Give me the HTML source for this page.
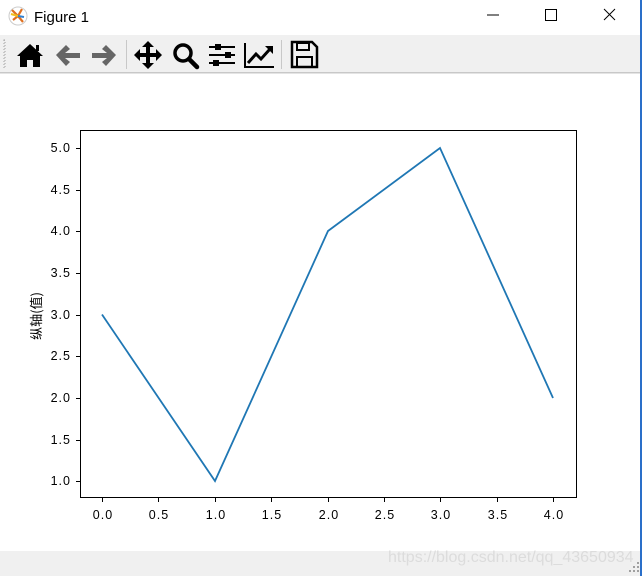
<!DOCTYPE html>
<html><head><meta charset="utf-8"><style>
html,body{margin:0;padding:0;width:642px;height:576px;overflow:hidden;background:#fff;font-family:"Liberation Sans","Noto Sans CJK SC",sans-serif}
</style></head><body>
<svg width="642" height="576" viewBox="0 0 642 576" xmlns="http://www.w3.org/2000/svg" style="position:absolute;left:0;top:0">
<rect x="0" y="0" width="642" height="576" fill="#fff"/>
<rect x="640" y="0" width="2" height="576" fill="#2a6fc9"/>
<circle cx="18" cy="16" r="9" fill="#fff" stroke="#ccc"/>
<path d="M12 10 L18 16 M18 16 L13 20 M18 16 L22 9 M18 16 L23 22" stroke="#e07020" stroke-width="2.2"/>
<path d="M18 16 L11 14" stroke="#f0c020" stroke-width="2.2"/>
<path d="M18 16 L24 17" stroke="#3080d0" stroke-width="2"/>
<text x="34" y="22" font-size="15" fill="#000">Figure 1</text>
<line x1="487" y1="15" x2="499" y2="15" stroke="#000" stroke-width="1"/>
<rect x="545.5" y="9.5" width="11" height="11" fill="none" stroke="#000"/>
<path d="M604 9 L615 20 M615 9 L604 20" stroke="#000" stroke-width="1"/>
<rect x="0" y="35" width="640" height="37" fill="#f0f0f0"/>
<rect x="0" y="72" width="640" height="1.5" fill="#c8c8c8"/>
<rect x="4" y="40" width="1" height="28" fill="none" stroke="#a0a0a0" stroke-dasharray="1 2"/>
<rect x="126" y="40" width="1" height="29" fill="#c8c8c8"/>
<rect x="281" y="40" width="1" height="29" fill="#c8c8c8"/>
<path d="M17 56 L30 44 L43 56 L40 56 L40 67 L33 67 L33 60 L27 60 L27 67 L20 67 L20 56 Z" fill="#000"/>
<rect x="36" y="45" width="3" height="6" fill="#000"/>
<path d="M56 55 L66 45 L70 49 L65 53 L80 53 L80 58 L65 58 L70 62 L66 66 Z" fill="#666"/>
<path d="M116 55 L106 45 L102 49 L107 53 L92 53 L92 58 L107 58 L102 62 L106 66 Z" fill="#666"/>
<path d="M148 41 L154 47 L150 47 L150 53 L156 53 L156 49 L162 55 L156 61 L156 57 L150 57 L150 63 L154 63 L148 69 L142 63 L146 63 L146 57 L140 57 L140 61 L134 55 L140 49 L140 53 L146 53 L146 47 L142 47 Z" fill="#000"/>
<circle cx="183" cy="53" r="8" fill="none" stroke="#000" stroke-width="3.5"/>
<path d="M189 59 L197 67" stroke="#000" stroke-width="4.5" stroke-linecap="round"/>
<g stroke="#000" stroke-width="2"><line x1="209" y1="47" x2="235" y2="47"/><line x1="209" y1="55" x2="235" y2="55"/><line x1="209" y1="63" x2="235" y2="63"/></g>
<rect x="215" y="44" width="6" height="6" fill="#000"/><rect x="225" y="52" width="6" height="6" fill="#000"/><rect x="213" y="60" width="6" height="6" fill="#000"/>
<path d="M245 43 L245 67 L274 67" fill="none" stroke="#000" stroke-width="2"/>
<path d="M248 63 L256 54 L261 59 L270 49" fill="none" stroke="#000" stroke-width="3"/>
<path d="M265 46 L273 46 L273 54 Z" fill="#000"/>
<path d="M292 42 L312 42 L317 47 L317 67 L292 67 Z" fill="none" stroke="#000" stroke-width="2.5"/>
<rect x="297" y="43" width="12" height="7" fill="none" stroke="#000" stroke-width="2"/>
<rect x="297" y="57" width="15" height="10" fill="none" stroke="#000" stroke-width="2"/>
<rect x="80.5" y="130.5" width="496" height="367" fill="none" stroke="#000" stroke-width="1"/>
<g stroke="#000" stroke-width="1">
<line x1="76" y1="148.5" x2="80" y2="148.5"/><line x1="76" y1="190.5" x2="80" y2="190.5"/><line x1="76" y1="231.5" x2="80" y2="231.5"/><line x1="76" y1="273.5" x2="80" y2="273.5"/><line x1="76" y1="315.5" x2="80" y2="315.5"/><line x1="76" y1="356.5" x2="80" y2="356.5"/><line x1="76" y1="398.5" x2="80" y2="398.5"/><line x1="76" y1="440.5" x2="80" y2="440.5"/><line x1="76" y1="481.5" x2="80" y2="481.5"/>
<line x1="102.5" y1="498" x2="102.5" y2="502"/><line x1="158.5" y1="498" x2="158.5" y2="502"/><line x1="215.5" y1="498" x2="215.5" y2="502"/><line x1="271.5" y1="498" x2="271.5" y2="502"/><line x1="328.5" y1="498" x2="328.5" y2="502"/><line x1="384.5" y1="498" x2="384.5" y2="502"/><line x1="440.5" y1="498" x2="440.5" y2="502"/><line x1="497.5" y1="498" x2="497.5" y2="502"/><line x1="553.5" y1="498" x2="553.5" y2="502"/>
</g>
<g font-size="12.5" fill="#000" text-anchor="end" letter-spacing="1">
<text x="71" y="152">5.0</text><text x="71" y="194">4.5</text><text x="71" y="235">4.0</text><text x="71" y="277">3.5</text><text x="71" y="319">3.0</text><text x="71" y="360">2.5</text><text x="71" y="402">2.0</text><text x="71" y="444">1.5</text><text x="71" y="485">1.0</text>
</g>
<g font-size="12.5" fill="#000" text-anchor="middle" letter-spacing="1">
<text x="103" y="519">0.0</text><text x="159" y="519">0.5</text><text x="216" y="519">1.0</text><text x="272" y="519">1.5</text><text x="329" y="519">2.0</text><text x="385" y="519">2.5</text><text x="441" y="519">3.0</text><text x="498" y="519">3.5</text><text x="554" y="519">4.0</text>
</g>
<text transform="translate(41,316) rotate(-90)" font-size="13" text-anchor="middle" fill="#000" font-family="'Noto Sans CJK SC',sans-serif">纵轴(值)</text>
<polyline points="102,314.5 215,481 328,231 440,148 553,398" fill="none" stroke="#1f77b4" stroke-width="1.8"/>
<rect x="0" y="551" width="640" height="25" fill="#f0f0f0"/>
<text x="388" y="562" font-size="16" fill="#dcdcdc">https://blog.csdn.net/qq_43650934</text>
<g fill="#a0a0a0"><rect x="633" y="566" width="2" height="2"/><rect x="633" y="570" width="2" height="2"/><rect x="629" y="570" width="2" height="2"/><rect x="637" y="562" width="2" height="2"/><rect x="637" y="566" width="2" height="2"/><rect x="637" y="570" width="2" height="2"/></g>
</svg>
</body></html>
